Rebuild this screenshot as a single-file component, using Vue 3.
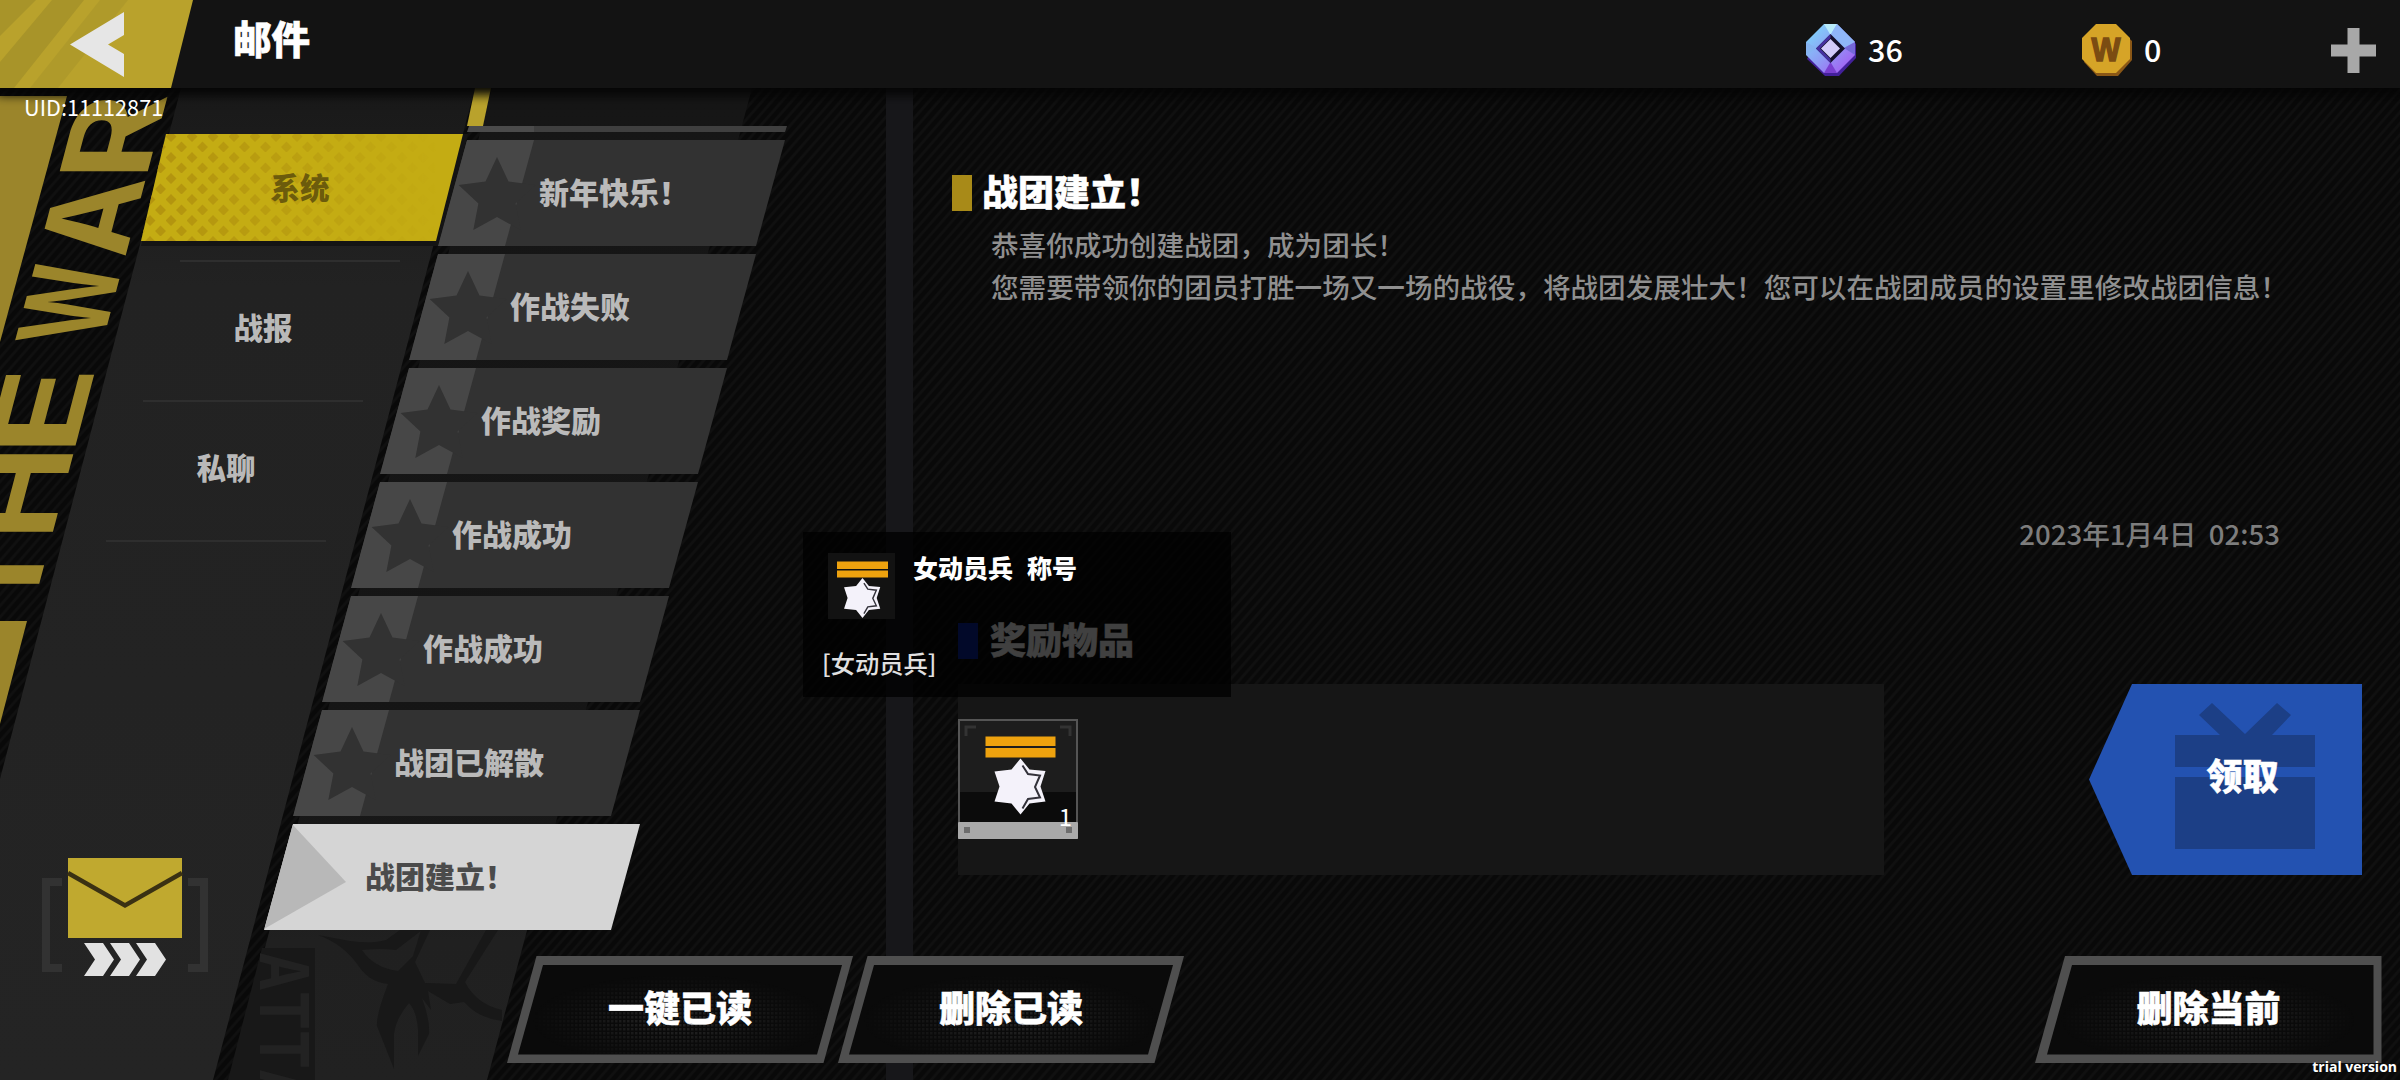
<script setup>
import { ref } from "vue";

const tabs = ["系统", "战报", "私聊"];
const activeTab = ref(0);

const mails = [
  "新年快乐！",
  "作战失败",
  "作战奖励",
  "作战成功",
  "作战成功",
  "战团已解散",
  "战团建立！",
];
const activeMail = ref(6);

// Wordmark running up the left edge, y is the bottom of each letter
const wordmark = [
  { char: "R", y: 180, length: 86 },
  { char: "A", y: 258, length: 80 },
  { char: "W", y: 342, length: 80 },
  { char: "E", y: 455, length: 88 },
  { char: "H", y: 540, length: 94 },
  { char: "T", y: 616, length: 83 },
];

// Letters lean with the side panel
const letterMatrix = (y) => `matrix(0.263 -1 1 0 ${147 - 0.263 * (y - 174)} ${y})`;

const banner = ["A", "T", "T", "A"];
</script>

<template>
  <div class="screen">
    <!-- Backdrop art -->
    <svg class="backdrop" width="2400" height="1080" viewBox="0 0 2400 1080">
      <defs>
        <linearGradient id="columnFade" x1="0" y1="0" x2="0" y2="1">
          <stop offset="0" stop-color="#161616" />
          <stop offset="0.7" stop-color="#151515" />
          <stop offset="0.86" stop-color="#202020" />
          <stop offset="1" stop-color="#212121" />
        </linearGradient>
        <linearGradient id="sideFade" x1="0" y1="0" x2="0" y2="1">
          <stop offset="0" stop-color="#191919" />
          <stop offset="0.2" stop-color="#222222" />
          <stop offset="1" stop-color="#242424" />
        </linearGradient>
      </defs>
      <rect x="886" y="88" width="27" height="992" fill="#17171a" />
      <polygon points="492,88 752,88 487,1080 230,1080" fill="url(#columnFade)" />
      <g fill="#181818">
        <polygon points="262,948 315,948 315,1080 228,1080" />
        <path d="M318 935L350 941Q372 944 386 940L400 930H422L396 950Q380 948 362 950Q374 968 398 971L413 956L421 930H430L415 962L425 983L456 984L486 930H498L465 982Q476 1004 502 1010V1021Q478 1018 464 1002L450 1004L428 991L431 1010L422 998Q430 1020 429 1034L418 1056V1030Q417 1012 409 1003Q396 1018 394 1034V1069L377 1026Q376 1015 388 984Q370 982 360 968Q344 944 318 935Z" />
      </g>
      <g class="banner-text">
        <text
          v-for="(char, i) in banner"
          :key="i"
          :transform="`translate(260 ${952 + i * 39}) rotate(90)`"
          textLength="39"
          lengthAdjust="spacingAndGlyphs"
        >{{ char }}</text>
      </g>
      <polygon points="181,88 475,88 213,1080 0,1080 0,779" fill="url(#sideFade)" />
      <polygon points="475,88 491,88 483,126 467,126" fill="#b9a22c" />
      <g fill="#9b852b">
        <polygon points="0,96 67,96 0,342" />
        <polygon points="0,621 27,621 0,724" />
      </g>
      <g class="wordmark">
        <text
          v-for="letter in wordmark"
          :key="letter.char"
          :transform="letterMatrix(letter.y)"
          :textLength="letter.length"
          lengthAdjust="spacingAndGlyphs"
        >{{ letter.char }}</text>
      </g>
    </svg>

    <header class="topbar">
      <button type="button" class="back" aria-label="Back">
        <svg width="194" height="88" viewBox="0 0 194 88">
          <polygon points="0,0 193,0 171,88 0,88" fill="#b9a22c" />
          <g fill="#a89429">
            <polygon points="0,0 36,0 0,36" />
            <polygon points="52,0 84,0 14,88 0,88 0,62" />
            <polygon points="100,0 128,0 58,88 30,88" opacity="0.55" />
          </g>
          <polygon points="70,44.5 124,12 124,35 108,44.5 124,54 124,77" fill="#e6e6e6" />
        </svg>
      </button>
      <h1 class="page-title">邮件</h1>

      <div class="currency gem">
        <svg width="50" height="52" viewBox="0 0 50 52">
          <defs>
            <linearGradient id="gem" x1="0" y1="0" x2="1" y2="1">
              <stop offset="0.1" stop-color="#7fd4fb" />
              <stop offset="0.5" stop-color="#8f9df5" />
              <stop offset="0.9" stop-color="#a45cf2" />
            </linearGradient>
          </defs>
          <polygon points="19,2 33,2 50,20 50,34 33,52 19,52 1,35" fill="#43209a" />
          <polygon points="18,0 31,0 49,18 49,31 31,49 18,49 0,31 0,18" fill="url(#gem)" />
          <polygon points="18,0 31,0 24.5,11" fill="#b9ecfb" />
          <polygon points="31,0 49,18 38,24 24.5,11" fill="#8fb6f8" />
          <polygon points="49,18 49,31 38,24" fill="#7468d8" />
          <polygon points="18,49 31,49 24.5,38" fill="#7a3fd0" />
          <polygon points="0,18 0,31 11,24" fill="#86b4f2" />
          <polygon points="24.5,10 39,24.5 24.5,39 10,24.5" fill="#15102c" />
          <polygon points="24.5,10 10,24.5 24.5,39 24.5,35 14,24.5 24.5,14" fill="#4630a0" />
          <polygon points="24.5,15 34,24.5 24.5,34 15,24.5" fill="#d3cbfb" />
        </svg>
        <span>36</span>
      </div>
      <div class="currency coin">
        <svg width="50" height="52" viewBox="0 0 50 52">
          <polygon points="15,2 34,2 50,17 50,36 36,52 15,52 2,38" fill="#8a5716" />
          <polygon points="14,0 34,0 48,14 48,35 34,49 14,49 0,35 0,14" fill="#d6a427" />
          <text x="9.5" y="37" class="coin-letter" textLength="29" lengthAdjust="spacingAndGlyphs">W</text>
        </svg>
        <span>0</span>
      </div>
      <button type="button" class="plus" aria-label="Add">
        <svg width="45" height="45" viewBox="0 0 45 45">
          <path d="M16.5 0h12v16.5H45v12H28.5V45h-12V28.5H0v-12h16.5z" fill="#a8a8a8" />
        </svg>
      </button>
    </header>

    <main class="layout">
      <nav class="sidebar">
        <button
          v-for="(tab, i) in tabs"
          :key="tab"
          type="button"
          class="tab"
          :class="{ active: i === activeTab }"
          :style="{ marginLeft: 141 - i * 37 + 'px' }"
          @click="activeTab = i"
        >
          <svg v-if="i === activeTab" class="tab-shape" width="328" height="112" viewBox="0 0 328 112">
            <defs>
              <pattern id="diamonds" width="21" height="21" patternUnits="userSpaceOnUse" patternTransform="translate(4 -3)">
                <path d="M5 0l5.5 5.5L5 11-.5 5.5zM15.5 10.500l5.500 5.500-5.500 5.500-5.500-5.500z" fill="#b3950f" />
              </pattern>
              <linearGradient id="fadeRight">
                <stop offset="0.1" stop-color="#fff" />
                <stop offset="0.9" stop-color="#000" />
              </linearGradient>
              <mask id="diamondMask"><rect width="328" height="112" fill="url(#fadeRight)" /></mask>
            </defs>
            <polygon points="24,0 327,0 299,112 0,112" fill="#141414" />
            <polygon points="25,0 322,0 295,107 0,107" fill="#c4ac13" />
            <polygon points="25,0 322,0 295,107 0,107" fill="url(#diamonds)" mask="url(#diamondMask)" />
          </svg>
          <span>{{ tab }}</span>
        </button>

        <div class="collect">
          <svg width="168" height="120" viewBox="0 0 168 120">
            <g fill="none" stroke="#323232" stroke-width="8">
              <path d="M20 24H4V110H20" />
              <path d="M146 24H162V110H146" />
            </g>
            <rect x="26" y="0" width="114" height="80" fill="#c0a92f" />
            <path d="M26 15L83 47.500L140 15" fill="none" stroke="#3a3113" stroke-width="4.500" />
            <g fill="#e2e2e2">
              <path d="M42 85H61L72 101.500L61 118H42L53 101.500z" />
              <path d="M68 85H87L98 101.500L87 118H68L79 101.500z" />
              <path d="M94 85H113L124 101.500L113 118H94L105 101.500z" />
            </g>
          </svg>
        </div>
      </nav>

      <section class="mail-list">
        <div class="mail-stub"></div>
        <button
          v-for="(mail, i) in mails"
          :key="i"
          type="button"
          class="mail"
          :class="{ active: i === activeMail }"
          :style="{ marginLeft: 174 - i * 29 + 'px' }"
          @click="activeMail = i"
        >
          <svg class="mail-mark" width="100" height="106" viewBox="0 0 100 106">
            <polygon v-if="i === activeMail" points="28,0 82,58 0,105" fill="#b8b8b8" />
            <template v-else>
              <polygon points="28.500,0 96,0 67,106 0,106" fill="#474747" />
              <polygon
                points="59,17 70.500,41.600 97.400,45 77.600,63.600 82.700,90 59,77.100 35.300,90 40.400,63.600 20.600,45 47.500,41.600"
                fill="#323232"
              />
            </template>
          </svg>
          <span>{{ mail }}</span>
        </button>
      </section>

      <section class="detail">
        <h2 class="heading"><i class="marker gold"></i><span>战团建立！</span></h2>
        <div class="message">
          <p>恭喜你成功创建战团，成为团长！</p>
          <p>您需要带领你的团员打胜一场又一场的战役，将战团发展壮大！您可以在战团成员的设置里修改战团信息！</p>
        </div>
        <time class="sent">2023年1月4日&nbsp; 02:53</time>
        <h2 class="heading reward-heading"><i class="marker blue"></i><span>奖励物品</span></h2>
        <div class="reward-row">
          <div class="rewards">
            <div class="reward">
              <svg width="120" height="120" viewBox="0 0 120 120">
                <rect x="1" y="1" width="118" height="118" fill="#1d1d1d" stroke="#555555" stroke-width="2" />
                <rect x="2" y="73" width="116" height="32" fill="#0b0b0b" />
                <path d="M8 17V8H18M102 8H112V17" fill="none" stroke="#333333" stroke-width="3" />
                <rect y="103" width="120" height="17" rx="1" fill="#a9a9a9" />
                <path d="M6 108h6v6H6zM108 108h6v6h-6z" fill="#6d6d6d" />
                <path d="M27.500 17.500H97.500V27H27.500zM27.500 29H97.500V38.500H27.500z" fill="#eea20e" />
                <use href="#medal" transform="translate(62.500 67.500)" />
              </svg>
              <span class="count">1</span>
            </div>
          </div>
          <button type="button" class="claim">
            <svg class="gift" width="140" height="147" viewBox="0 0 140 147">
              <g fill="#1c3f86">
                <path d="M24 12L37 0L70 31L102 0L116 12L97 32H140V64H0V32H45z" />
                <rect y="74" width="140" height="72" />
              </g>
            </svg>
            <span>领取</span>
          </button>
        </div>
      </section>

      <footer class="actions">
        <button type="button" class="action">
          <svg class="frame" width="346" height="107" viewBox="0 0 346 107">
            <defs>
              <pattern id="mesh" width="4" height="4" patternUnits="userSpaceOnUse">
                <rect width="2.500" height="2.500" fill="#262626" />
              </pattern>
              <radialGradient id="meshFade" cx="0.5" cy="0.6" r="0.5">
                <stop offset="0" stop-color="#fff" />
                <stop offset="0.85" stop-color="#000" />
              </radialGradient>
              <mask id="meshMask"><rect width="346" height="107" fill="url(#meshFade)" /></mask>
            </defs>
            <polygon points="29.500,0 346,0 316.500,107 0,107" fill="#4f4f4f" />
            <polygon points="36,9 335,9 310,98.500 11,98.500" fill="#0a0a0a" />
            <polygon points="36,9 335,9 310,98.500 11,98.500" fill="url(#mesh)" mask="url(#meshMask)" />
          </svg>
          <span>一键已读</span>
        </button>
        <button type="button" class="action">
          <svg class="frame" width="346" height="107" viewBox="0 0 346 107">
            <polygon points="29.500,0 346,0 316.500,107 0,107" fill="#4f4f4f" />
            <polygon points="36,9 335,9 310,98.500 11,98.500" fill="#0a0a0a" />
            <polygon points="36,9 335,9 310,98.500 11,98.500" fill="url(#mesh)" mask="url(#meshMask)" />
          </svg>
          <span>删除已读</span>
        </button>
        <button type="button" class="action delete-current">
          <svg class="frame" width="347" height="107" viewBox="0 0 347 107">
            <polygon points="30,0 346.500,0 346.500,107 0,107" fill="#4f4f4f" />
            <polygon points="37,9 338.500,9 338.500,98.500 12,98.500" fill="#0a0a0a" />
            <polygon points="37,9 338.500,9 338.500,98.500 12,98.500" fill="url(#mesh)" mask="url(#meshMask)" />
          </svg>
          <span>删除当前</span>
        </button>
      </footer>
    </main>

    <!-- Item tooltip -->
    <div class="tooltip">
      <div class="tooltip-head">
        <svg width="67" height="66" viewBox="0 0 67 66">
          <defs>
            <g id="medal">
              <path d="M0 -28L9 -17L25 -15.500L20 0L25 15L9 17L0 28L-9 17L-26 15L-21 0L-26 -15L-9 -17z" fill="#f4f2fa" />
              <path d="M2 -21L7.500 -12.500L19.500 -11L14.500 0.500L19.500 11L7.500 12.500L2 22" fill="none" stroke="#33323a" stroke-width="2" />
            </g>
          </defs>
          <rect width="67" height="66" fill="#121212" />
          <path d="M9 8.500H60V16H9zM9 17.500H60V24.500H9z" fill="#eea20e" />
          <use href="#medal" transform="translate(34.500 45) scale(0.710)" />
        </svg>
        <strong class="tooltip-title"><span>女动员兵</span><span>称号</span></strong>
      </div>
      <p class="tooltip-text">[女动员兵]</p>
    </div>

    <span class="uid">UID:11112871</span>
    <span class="trial">trial version</span>
  </div>
</template>

<style>
body {
  background: #0a0a0a;
}
</style>

<style scoped>
.screen {
  position: relative;
  width: 2400px;
  height: 1080px;
  overflow: hidden;
  background: repeating-linear-gradient(131deg, #090909 0 3.2px, #101010 4.6px 6px, #090909 7.4px);
  font-family: "Noto Sans CJK SC", "Noto Sans", sans-serif;
  color: #fff;
}

.backdrop {
  position: absolute;
  inset: 0;
}

.wordmark text {
  font: 700 121px Inter, "Liberation Sans", sans-serif;
  fill: #9b852b;
}

.banner-text text {
  font: 700 68px Inter, "Liberation Sans", sans-serif;
  fill: #222222;
}

button {
  padding: 0;
  border: none;
  background: none;
  color: inherit;
  font: inherit;
  cursor: pointer;
}

h1,
h2,
p {
  margin: 0;
}

svg {
  display: block;
}

/* Top bar */
.topbar {
  position: relative;
  display: flex;
  align-items: center;
  height: 88px;
  background: #131313;
  box-shadow: 0 4px 10px 3px #050505;
}

.back {
  width: 194px;
  height: 88px;
}

.page-title {
  width: 1573px;
  margin: 0 0 13px 39px;
  font-size: 38.500px;
  font-weight: 900;
  line-height: 1;
  -webkit-text-stroke: 0.6px currentColor;
}

.currency {
  display: flex;
  align-items: center;
  gap: 12px;
  padding-top: 12px;
  font-size: 30.500px;
  font-weight: 500;
  line-height: 1;
}

.currency span {
  padding-bottom: 2px;
}

.gem {
  width: 276px;
}

.coin {
  width: 249px;
}

.coin-letter {
  font: 700 33px "Liberation Sans", sans-serif;
  fill: #7b4c12;
  stroke: #7b4c12;
  stroke-width: 1.5px;
}

.plus {
  padding-top: 12px;
}

/* Columns */
.layout {
  position: relative;
  display: grid;
  grid-template-columns: 264px 649px 1fr;
  grid-template-rows: 842px 150px;
}

.sidebar {
  grid-row: span 2;
  display: flex;
  flex-direction: column;
  align-items: flex-start;
  gap: 33px;
  padding-top: 46px;
}

.tab {
  position: relative;
  flex: none;
  width: 322px;
  height: 107px;
  font-size: 29.500px;
  font-weight: 900;
  color: #b9b9b9;
}

.tab::after {
  content: "";
  position: absolute;
  left: 39px;
  top: 126px;
  width: 220px;
  height: 2px;
  background: #2e2e2e;
}

.tab span {
  position: relative;
  left: -2px;
  top: -2px;
}

.tab.active {
  color: #6c5b0c;
}

.tab-shape {
  position: absolute;
  top: 0;
  left: 0;
}

.collect {
  margin: 304px 0 0 42px;
}

.mail-list {
  display: flex;
  flex-direction: column;
  align-items: flex-start;
  gap: 8px;
  padding-top: 38px;
}

.mail-stub {
  flex: none;
  width: 320px;
  height: 6px;
  margin-left: 203px;
  background: linear-gradient(90deg, #4b4b4b 67px, #3f3f3f 67px);
  clip-path: polygon(2px 0, 100% 0, 318px 100%, 0 100%);
}

.mail {
  display: flex;
  align-items: center;
  flex: none;
  width: 347px;
  height: 106px;
  background: #323232;
  clip-path: polygon(29px 0, 100% 0, calc(100% - 29px) 100%, 0 100%);
  font-size: 30px;
  font-weight: 900;
  color: #bababa;
}

.mail.active {
  width: 376px;
  background: #d5d5d5;
  color: #4b4b4b;
}

.mail span {
  margin: 0 0 4px 1px;
  white-space: nowrap;
}

/* Detail */
.detail {
  display: flex;
  flex-direction: column;
  align-items: flex-start;
  padding: 85px 0 0 39px;
}

.heading {
  display: flex;
  align-items: center;
  gap: 10px;
  height: 40px;
  font-size: 36px;
  font-weight: 900;
  line-height: 40px;
  -webkit-text-stroke: 0.5px currentColor;
}

.heading span {
  padding-bottom: 6px;
}

.marker {
  width: 20px;
  height: 36px;
}

.gold {
  background: #a88a18;
}

.blue {
  background: #0b25a3;
}

.message {
  margin: 10px 0 0 39px;
  font-size: 27.600px;
  font-weight: 500;
  line-height: 42px;
  color: #8f8f8f;
  white-space: nowrap;
}

.sent {
  align-self: flex-end;
  margin: 205px 120px 0 0;
  font-size: 27.600px;
  font-weight: 500;
  line-height: 42px;
  color: #7d7d7d;
}

.reward-heading {
  margin: 67px 0 0 6px;
  gap: 12px;
}

.reward-row {
  display: flex;
  justify-content: space-between;
  width: 1404px;
  margin: 23px 0 0 6px;
}

.rewards {
  width: 926px;
  height: 156px;
  padding-top: 35px;
  background: #161616;
}

.reward {
  position: relative;
  width: 120px;
}

.count {
  position: absolute;
  right: 6px;
  bottom: 11px;
  font-size: 24px;
  line-height: 1;
}

.claim {
  position: relative;
  width: 273px;
  height: 191px;
  background: #2352b1;
  clip-path: polygon(43px 0, 100% 0, 100% 100%, 43px 100%, 0 50%);
  font-size: 36px;
  font-weight: 900;
  line-height: 1;
}

.claim span {
  position: relative;
  left: 17px;
  top: -6px;
  -webkit-text-stroke: 0.5px currentColor;
}

.gift {
  position: absolute;
  left: 86px;
  top: 19px;
}

/* Footer buttons */
.actions {
  grid-column: 2 / 4;
  display: flex;
  padding: 26px 0 0 243px;
}

.action {
  position: relative;
  width: 346px;
  height: 107px;
  margin-right: -15px;
  font-size: 36px;
  font-weight: 900;
  line-height: 1;
}

.action span {
  position: relative;
  top: -4px;
  -webkit-text-stroke: 0.5px currentColor;
}

.delete-current {
  width: 347px;
  margin: 0 18px 0 auto;
}

.frame {
  position: absolute;
  inset: 0;
}

/* Tooltip */
.tooltip {
  position: absolute;
  left: 803px;
  top: 532px;
  box-sizing: border-box;
  width: 428px;
  height: 165px;
  padding: 21px 0 0 25px;
  background: rgba(0, 0, 0, 0.75);
}

.tooltip-head {
  display: flex;
  gap: 18px;
}

.tooltip-title {
  display: flex;
  gap: 14px;
  padding-top: 1px;
  font-size: 25px;
  font-weight: 900;
  line-height: 26px;
}

.tooltip-text {
  margin: 30px 0 0 -6px;
  font-size: 24.300px;
  font-weight: 500;
  line-height: 28px;
  color: #e0e0e0;
}

.uid {
  position: absolute;
  left: 24px;
  top: 95px;
  font-size: 21.700px;
  line-height: 24px;
}

.trial {
  position: absolute;
  right: 3px;
  bottom: 3px;
  font: 700 14px/20px "Open Sans", sans-serif;
}
</style>
